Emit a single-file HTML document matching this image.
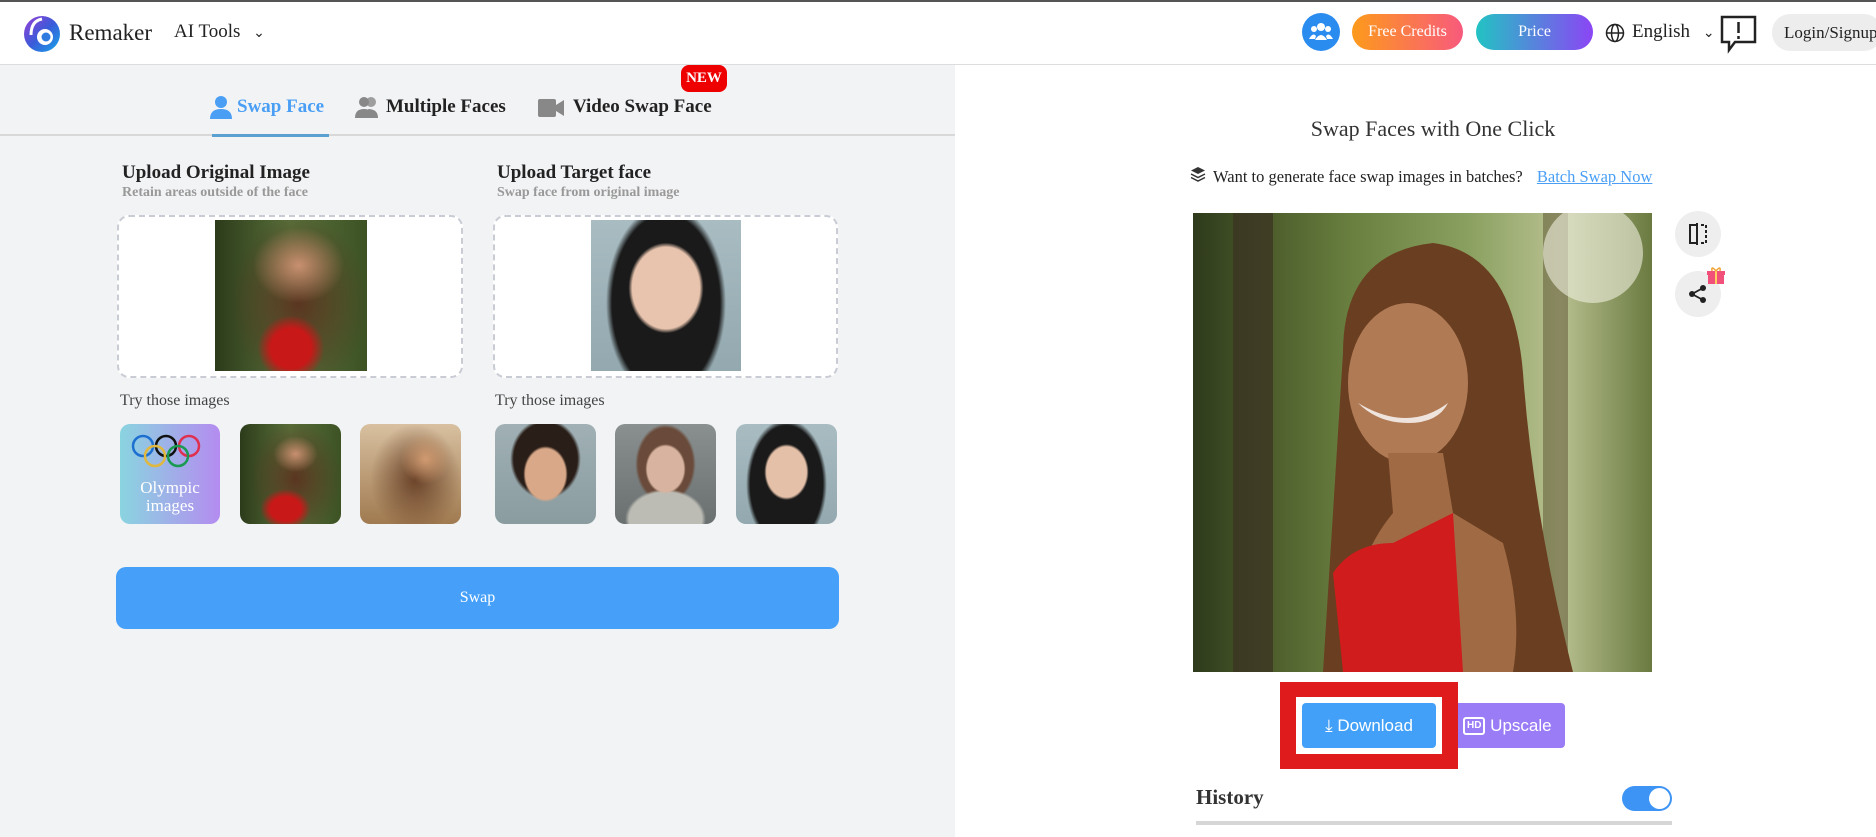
<!DOCTYPE html>
<html><head><meta charset="utf-8"><style>
*{box-sizing:border-box;margin:0;padding:0}
body{width:1876px;height:837px;overflow:hidden;background:#fff;font-family:"Liberation Serif",serif;position:relative;color:#222}
.abs{position:absolute}
.hdr{left:0;top:0;width:1876px;height:65px;background:#fff;border-top:2px solid #555;border-bottom:1px solid #ddd}
.left{left:0;top:65px;width:955px;height:772px;background:#f2f3f5}
.tab{top:96px;font-size:19px;font-weight:bold;white-space:nowrap}
.dz{border:2px dashed #c9ccd4;border-radius:12px;background:#fff}
.th{border-radius:10px;overflow:hidden}
.btnr{border-radius:18px;color:#fff;font-size:17px;text-align:center;line-height:36px}
.circ{width:46px;height:46px;border-radius:50%;background:#eee}
</style></head><body>
<div class="abs hdr"></div>
<svg class="abs" style="left:23px;top:15px" width="38" height="38" viewBox="0 0 38 38"><defs><linearGradient id="lg" x1="0" y1="0" x2="1" y2="1"><stop offset="0" stop-color="#9b3fd6"/><stop offset=".5" stop-color="#3a5bd9"/><stop offset="1" stop-color="#17a6e8"/></linearGradient></defs><circle cx="19" cy="19" r="18" fill="url(#lg)"/><circle cx="22" cy="22" r="8" fill="#fff"/><circle cx="23" cy="22" r="4.5" fill="#2f7be0"/><path d="M19 4 Q8 6 8 20" stroke="#fff" stroke-width="3" fill="none"/></svg>
<div class="abs" style="left:69px;top:20px;font-size:23px">Remaker</div>
<div class="abs" style="left:174px;top:21px;font-size:19px">AI Tools <span style="font-size:14px;margin-left:8px">&#8964;</span></div>
<div class="abs" style="left:1302px;top:13px;width:38px;height:38px;border-radius:50%;background:#2b8cf0"></div>
<svg class="abs" style="left:1306px;top:17px" width="30" height="30" viewBox="0 0 30 30" fill="#fff"><circle cx="15" cy="10" r="4"/><circle cx="8" cy="12" r="3"/><circle cx="22" cy="12" r="3"/><path d="M9 23 q6-10 12 0z"/><path d="M3 22 q4-7 7-3 l-1 3z"/><path d="M27 22 q-4-7-7-3 l1 3z"/></svg>
<div class="abs btnr" style="left:1352px;top:14px;width:111px;background:linear-gradient(90deg,#fd9a1c,#f85a7c);font-size:16px">Free Credits</div>
<div class="abs btnr" style="left:1476px;top:14px;width:117px;background:linear-gradient(90deg,#22c3c3,#8b45f5);font-size:16px">Price</div>
<svg class="abs" style="left:1605px;top:23px" width="20" height="20" viewBox="0 0 20 20" fill="none" stroke="#222" stroke-width="1.5"><circle cx="10" cy="10" r="8.5"/><ellipse cx="10" cy="10" rx="3.5" ry="8.5"/><path d="M1.5 10h17"/></svg>
<div class="abs" style="left:1632px;top:21px;font-size:19px">English <span style="font-size:14px;margin-left:8px">&#8964;</span></div>
<svg class="abs" style="left:1719px;top:14px" width="40" height="40" viewBox="0 0 40 40" fill="none" stroke="#222" stroke-width="2.5"><path d="M3 3h33v25H16l-6 8v-8H3z"/><path d="M19.5 8v11M19.5 22v3"/></svg>
<div class="abs" style="left:1772px;top:14px;width:110px;height:37px;border-radius:18px;background:#ededed;font-size:17px;line-height:37px;padding-left:12px">Login/Signup</div>
<div class="abs left"></div>
<div class="abs" style="left:0;top:134px;width:955px;height:2px;background:#d8d8d8"></div>
<div class="abs" style="left:212px;top:134px;width:117px;height:3px;background:#5aa0d0"></div>
<svg class="abs" style="left:210px;top:95px" width="22" height="24" viewBox="0 0 22 24" fill="#4a9ff5"><circle cx="11" cy="7" r="6"/><path d="M0 24q0-10 11-10t11 10z"/></svg>
<div class="abs tab" style="left:237px;color:#4a9ff5">Swap Face</div>
<svg class="abs" style="left:355px;top:95px" width="24" height="24" viewBox="0 0 24 24" fill="#888"><circle cx="9" cy="7" r="5"/><circle cx="16" cy="7" r="5" opacity=".8"/><path d="M0 23q0-9 9-9t9 9z"/><path d="M13 14q10 0 10 9h-6z"/></svg>
<div class="abs tab" style="left:386px">Multiple Faces</div>
<svg class="abs" style="left:538px;top:99px" width="26" height="18" viewBox="0 0 26 18" fill="#888"><rect width="18" height="18" rx="2"/><path d="M18 6l8-5v16l-8-5z"/></svg>
<div class="abs tab" style="left:573px">Video Swap Face</div>
<div class="abs" style="left:681px;top:65px;width:46px;height:27px;background:#e00;border-radius:8px;color:#fff;font-weight:bold;font-size:15px;text-align:center;line-height:27px">NEW</div>

<div class="abs" style="left:122px;top:162px;font-size:19px;font-weight:bold">Upload Original Image</div>
<div class="abs" style="left:122px;top:185px;font-size:14px;font-weight:bold;color:#999">Retain areas outside of the face</div>
<div class="abs" style="left:497px;top:162px;font-size:19px;font-weight:bold">Upload Target face</div>
<div class="abs" style="left:497px;top:185px;font-size:14px;font-weight:bold;color:#999">Swap face from original image</div>
<div class="abs dz" style="left:117px;top:215px;width:346px;height:163px"></div>
<div class="abs dz" style="left:493px;top:215px;width:345px;height:163px"></div>
<div class="abs" style="left:215px;top:220px;width:152px;height:151px;background:radial-gradient(ellipse 30% 25% at 55% 30%,#c89070,transparent),radial-gradient(ellipse 22% 22% at 50% 85%,#c81818 60%,transparent),radial-gradient(ellipse 45% 60% at 55% 55%,#5a3520,transparent),linear-gradient(90deg,#2c3b1a,#58703a 50%,#3d5224)"></div>
<div class="abs" style="left:591px;top:220px;width:150px;height:151px;background:radial-gradient(ellipse 25% 30% at 50% 45%,#e8c4ae 90%,transparent),radial-gradient(ellipse 40% 65% at 50% 55%,#1a1a1a 90%,transparent),linear-gradient(#a8bcc2,#93a9af)"></div>
<div class="abs" style="left:120px;top:392px;font-size:16px;color:#444">Try those images</div>
<div class="abs" style="left:495px;top:392px;font-size:16px;color:#444">Try those images</div>
<div class="abs th" style="left:120px;top:424px;width:100px;height:100px;background:linear-gradient(90deg,#8ad4e0,#b48cf0)">
<svg width="100" height="50" viewBox="0 0 100 50" fill="none" stroke-width="2.5"><circle cx="23" cy="22" r="10" stroke="#1d6fd0"/><circle cx="46" cy="22" r="10" stroke="#111"/><circle cx="69" cy="22" r="10" stroke="#e03050"/><circle cx="35" cy="32" r="10" stroke="#e0b840"/><circle cx="58" cy="32" r="10" stroke="#1a9a50"/></svg>
<div style="color:#fff;font-size:17px;text-align:center;line-height:18px">Olympic<br>images</div></div>
<div class="abs th" style="left:240px;top:424px;width:101px;height:100px;background:radial-gradient(ellipse 22% 18% at 55% 30%,#c89070,transparent),radial-gradient(ellipse 25% 20% at 45% 85%,#c81818 60%,transparent),radial-gradient(ellipse 45% 60% at 55% 55%,#5a3520,transparent),linear-gradient(90deg,#2c3b1a,#58703a 50%,#3d5224)"></div>
<div class="abs th" style="left:360px;top:424px;width:101px;height:100px;background:radial-gradient(ellipse 25% 25% at 65% 35%,#d09a70,transparent),radial-gradient(ellipse 45% 55% at 55% 55%,#6a4228,transparent),linear-gradient(#d8c0a0,#a07a50)"></div>
<div class="abs th" style="left:495px;top:424px;width:101px;height:100px;background:radial-gradient(ellipse 22% 28% at 50% 50%,#d8a888 90%,transparent),radial-gradient(ellipse 35% 40% at 50% 35%,#2a1e18 90%,transparent),linear-gradient(#a0b0b4,#8a9ca0)"></div>
<div class="abs th" style="left:615px;top:424px;width:101px;height:100px;background:radial-gradient(ellipse 20% 25% at 50% 45%,#d8b4a0 90%,transparent),radial-gradient(ellipse 40% 30% at 50% 95%,#bcbcb4 90%,transparent),radial-gradient(ellipse 30% 40% at 50% 40%,#6a4a3a 90%,transparent),linear-gradient(#8a9090,#6a7070)"></div>
<div class="abs th" style="left:736px;top:424px;width:101px;height:100px;background:radial-gradient(ellipse 22% 28% at 50% 48%,#e4c0a8 90%,transparent),radial-gradient(ellipse 40% 65% at 50% 60%,#1a1a1a 90%,transparent),linear-gradient(#a8bcc2,#93a9af)"></div>
<div class="abs" style="left:116px;top:567px;width:723px;height:62px;border-radius:10px;background:#46a0fa;color:#fff;font-size:16px;text-align:center;line-height:62px">Swap</div>
<div class="abs" style="left:1233px;top:116px;width:400px;text-align:center;font-size:22px;color:#333">Swap Faces with One Click</div>
<svg class="abs" style="left:1190px;top:166px" width="16" height="16" viewBox="0 0 16 16" fill="#333"><path d="M8 1l7 3.5-7 3.5-7-3.5z"/><path d="M1 8l7 3.5L15 8" stroke="#333" fill="none" stroke-width="1.5"/><path d="M1 11.5l7 3.5 7-3.5" stroke="#333" fill="none" stroke-width="1.5"/></svg>
<div class="abs" style="left:1213px;top:167px;font-size:16.5px;color:#222">Want to generate face swap images in batches? <span style="color:#4a9ff5;text-decoration:underline;margin-left:10px">Batch Swap Now</span></div>
<div class="abs" style="left:1193px;top:213px;width:459px;height:459px;overflow:hidden;background:linear-gradient(90deg,#2e3a1c 0%,#4a5a2a 15%,#6a8040 35%,#8aa060 60%,#b8c090 80%,#6a7a40 100%)">
<svg width="459" height="459" viewBox="0 0 459 459"><rect x="40" y="0" width="40" height="459" fill="#3a3022" opacity=".7"/><rect x="350" y="0" width="25" height="459" fill="#5a5030" opacity=".5"/><circle cx="400" cy="40" r="50" fill="#f0f0e0" opacity=".6"/><path d="M150 140 Q150 40 240 30 Q320 40 330 160 Q340 300 380 459 L130 459 Q140 300 150 140z" fill="#6a3e20"/><ellipse cx="215" cy="170" rx="60" ry="80" fill="#b07a55"/><path d="M195 240 L250 240 L260 300 L310 330 Q330 400 320 459 L160 459 Q150 360 200 300z" fill="#a06a45"/><path d="M140 360 Q160 330 200 330 L260 300 L270 459 L150 459z" fill="#d01c1c"/><path d="M165 190 Q215 220 255 190 Q245 210 215 210 Q185 210 165 190z" fill="#fff" opacity=".8"/></svg></div>
<div class="abs circ" style="left:1675px;top:211px"></div>
<svg class="abs" style="left:1686px;top:222px" width="24" height="24" viewBox="0 0 24 24" fill="none" stroke="#222" stroke-width="2"><path d="M11 3H4v18h7M11 1v22"/><path d="M15 3h5v18h-5" stroke-dasharray="3 2"/></svg>
<div class="abs circ" style="left:1675px;top:271px"></div>
<svg class="abs" style="left:1688px;top:284px" width="20" height="20" viewBox="0 0 20 20" fill="#222"><circle cx="15" cy="4" r="3"/><circle cx="4" cy="10" r="3"/><circle cx="15" cy="16" r="3"/><path d="M15 4L4 10l11 6" stroke="#222" stroke-width="1.8" fill="none"/></svg>
<svg class="abs" style="left:1706px;top:265px" width="20" height="20" viewBox="0 0 20 20"><rect x="2" y="8" width="16" height="11" fill="#f0507a"/><rect x="1" y="6" width="18" height="4" fill="#f0507a"/><rect x="9" y="6" width="2" height="13" fill="#ffd060"/><path d="M10 6 Q5 0 6 6 M10 6 Q15 0 14 6" stroke="#f0a030" fill="none" stroke-width="1.5"/></svg>
<div class="abs" style="left:1280px;top:682px;width:178px;height:87px;background:#e01b1b"></div>
<div class="abs" style="left:1296px;top:697px;width:146px;height:57px;background:#fff"></div>
<div class="abs" style="left:1302px;top:703px;width:134px;height:45px;border-radius:4px;background:#42a0f8;color:#fff;font-family:'Liberation Sans',sans-serif;font-size:17px;line-height:45px;text-align:center">&#10515; Download</div>
<div class="abs" style="left:1458px;top:703px;width:107px;height:45px;border-radius:0 4px 4px 0;background:#9a7cf6;color:#fff;font-family:'Liberation Sans',sans-serif;font-size:17px;line-height:45px;padding-left:5px"><span style="display:inline-block;border:2px solid #fff;border-radius:3px;font-size:10px;font-weight:bold;line-height:14px;padding:0 2px;vertical-align:3px">HD</span> Upscale</div>
<div class="abs" style="left:1196px;top:785px;font-size:21px;font-weight:bold;color:#333">History</div>
<div class="abs" style="left:1622px;top:786px;width:50px;height:25px;border-radius:13px;background:#3d94f5"></div>
<div class="abs" style="left:1649px;top:788px;width:21px;height:21px;border-radius:50%;background:#fff"></div>
<div class="abs" style="left:1196px;top:821px;width:476px;height:4px;background:#d6d6d6"></div>
</body></html>
